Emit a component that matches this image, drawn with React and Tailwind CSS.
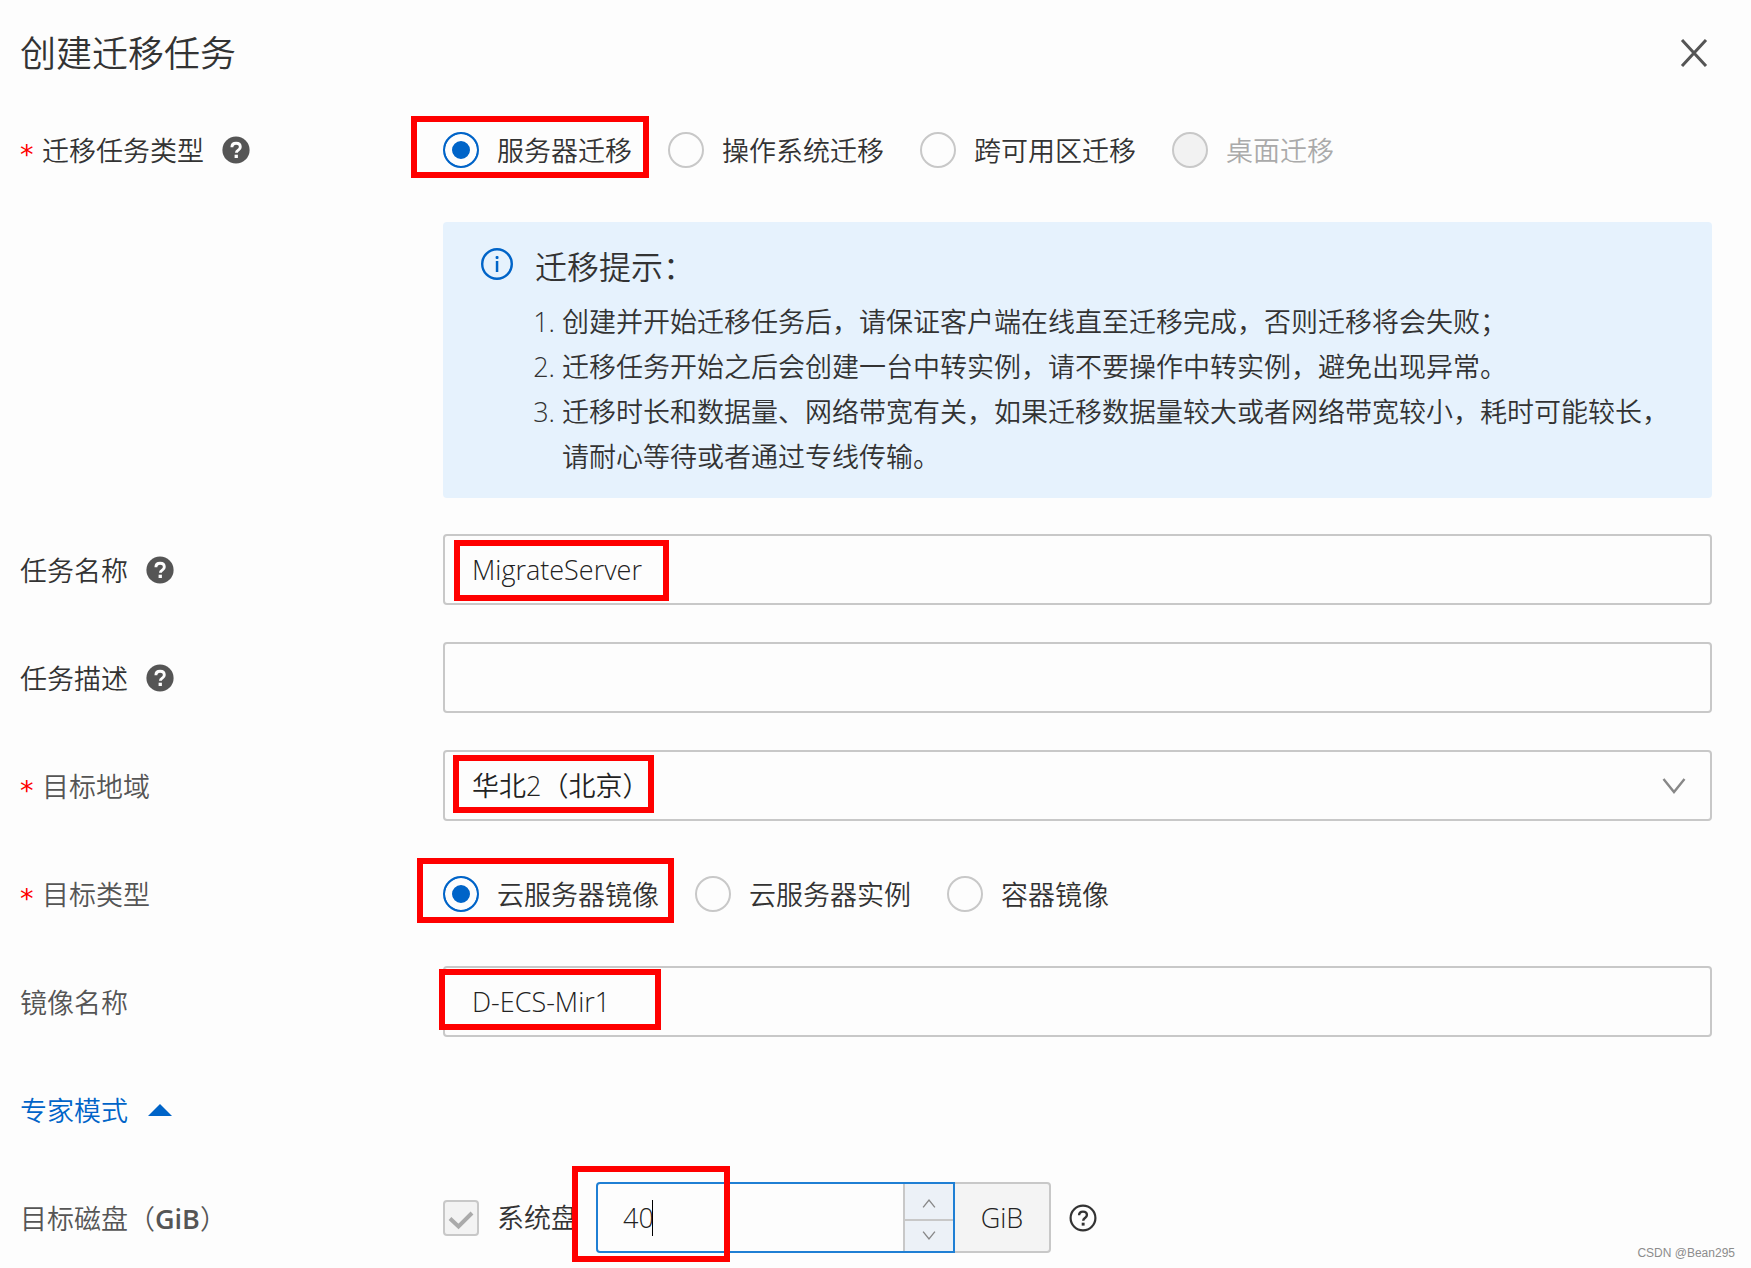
import React from "react";

const RADIO =
  "size-9 shrink-0 appearance-none rounded-full border-2 border-[#c8c8c8] checked:border-[#0064c8] checked:bg-[#0064c8] checked:shadow-[inset_0_0_0_7px_#fdfdfd] disabled:bg-[#f2f2f2]";
const TEXT_BOX =
  "h-[71px] w-full rounded-[4px] border-2 border-[#c8c8c8] bg-transparent px-[27px] text-[#222] outline-none";

function HelpSolid() {
  return (
    <svg viewBox="0 0 28 28" className="size-7 shrink-0" aria-hidden="true">
      <circle cx="14" cy="14" r="13.6" fill="#555" />
      <path d="M9.9 11.2c0-2.500 1.700-4 4.200-4s4.200 1.500 4.200 3.700c0 1.500-.8 2.400-2 3.200-1.300.9-1.900 1.300-1.900 2.700" fill="none" stroke="#fdfdfd" strokeWidth="2.900" />
      <rect x="12.600" y="18.700" width="3.300" height="3.300" fill="#fdfdfd" />
    </svg>
  );
}

function HelpOutline() {
  return (
    <svg viewBox="0 0 28 28" className="size-7 shrink-0" aria-hidden="true">
      <circle cx="14" cy="14" r="12.400" fill="none" stroke="#333" strokeWidth="2.200" />
      <path d="M10.100 11.300c0-2.200 1.500-3.700 3.900-3.700s3.900 1.400 3.900 3.400c0 1.400-.8 2.200-1.900 3-1.200.9-1.800 1.300-1.800 2.800" fill="none" stroke="#333" strokeWidth="2.400" />
      <rect x="12.700" y="18.700" width="2.900" height="2.900" fill="#333" />
    </svg>
  );
}

function Chevron({ className, up }) {
  return (
    <svg viewBox="0 0 24 16" className={className} fill="none" aria-hidden="true">
      <path d={up ? "M1.500 15 12 2 22.500 15" : "M1.500 1 12 14 22.500 1"} stroke="currentColor" strokeWidth="2.400" />
    </svg>
  );
}

function Highlight({ className }) {
  return <span aria-hidden="true" className={"pointer-events-none absolute border-6 border-[#ff0000] " + className} />;
}

function Row({ label, htmlFor, required, help, muted, children }) {
  const Tag = htmlFor ? "label" : "div";
  return (
    <div className="flex min-h-[72px] items-start">
      <div className="flex h-[72px] w-[423px] shrink-0 items-center">
        {required && <span className="w-[22px] pt-2 font-['DejaVu_Sans',sans-serif] font-normal text-[#ff0000]">*</span>}
        <Tag htmlFor={htmlFor} className={muted ? "text-[#555]" : "text-[#333]"}>
          {label}
        </Tag>
        {help && (
          <button type="button" aria-label="帮助" className="ml-[18px]">
            <HelpSolid />
          </button>
        )}
      </div>
      <div className="relative min-w-0 flex-1">{children}</div>
    </div>
  );
}

function RadioGroup({ name, label, options }) {
  return (
    <div role="radiogroup" aria-label={label} className="flex h-[72px] items-center gap-9">
      {options.map((o, i) => (
        <label key={o.text} className={"flex items-center gap-[18px] " + (o.disabled ? "text-[#aaa]" : "text-[#333]")}>
          <input type="radio" name={name} defaultChecked={i === 0} disabled={o.disabled} className={RADIO} />
          {o.text}
        </label>
      ))}
    </div>
  );
}

export default function App() {
  return (
    <main className="relative min-h-screen bg-[#fdfdfd] pr-[39px] pb-3 pl-5 font-['Open_Sans','Noto_Sans_CJK_SC',sans-serif] text-[27px] leading-[45px] font-[350] text-[#333]">
      <header className="flex h-[114px] items-start justify-between pt-7">
        <h1 className="text-[36px] leading-[52px] font-[350]">创建迁移任务</h1>
        <button type="button" aria-label="关闭" className="mt-[11px] mr-1">
          <svg viewBox="0 0 28 28" className="size-7" fill="none" aria-hidden="true">
            <path d="M2 1 26 27M26 1 2 27" stroke="#555" strokeWidth="3" />
          </svg>
        </button>
      </header>

      <form className="flex flex-col gap-9">
        <Row label="迁移任务类型" required help>
          <RadioGroup
            name="task-type"
            label="迁移任务类型"
            options={[{ text: "服务器迁移" }, { text: "操作系统迁移" }, { text: "跨可用区迁移" }, { text: "桌面迁移", disabled: true }]}
          />
          <Highlight className="top-0.5 -left-8 h-[62px] w-[238px]" />
        </Row>

        <section className="ml-[423px] flex gap-[21px] rounded-[4px] bg-[#e6f2fd] pt-[22px] pr-9 pb-[19px] pl-[37px]">
          <svg viewBox="0 0 34 34" className="mt-[3px] size-[34px] shrink-0" fill="none" aria-hidden="true">
            <circle cx="17" cy="17" r="14.800" stroke="#0064c8" strokeWidth="2.400" />
            <rect x="15.600" y="9" width="2.900" height="2.900" rx="1" fill="#0064c8" />
            <rect x="15.800" y="14" width="2.500" height="11" fill="#0064c8" />
          </svg>
          <div>
            <h2 className="mb-2.5 text-[32px] leading-[45px] font-[350]">迁移提示：</h2>
            <ol className="list-outside list-decimal pl-[27px]">
              <li>创建并开始迁移任务后，请保证客户端在线直至迁移完成，否则迁移将会失败；</li>
              <li>迁移任务开始之后会创建一台中转实例，请不要操作中转实例，避免出现异常。</li>
              <li>迁移时长和数据量、网络带宽有关，如果迁移数据量较大或者网络带宽较小，耗时可能较长，请耐心等待或者通过专线传输。</li>
            </ol>
          </div>
        </section>

        <Row label="任务名称" htmlFor="task-name" help>
          <input id="task-name" type="text" defaultValue="MigrateServer" className={TEXT_BOX} />
          <Highlight className="top-1.5 left-[11px] h-[61px] w-[215px]" />
        </Row>

        <Row label="任务描述" htmlFor="task-desc" help>
          <input id="task-desc" type="text" className={TEXT_BOX} />
        </Row>

        <Row label="目标地域" htmlFor="region" required muted>
          <select id="region" className={TEXT_BOX + " appearance-none"}>
            <option>华北2（北京）</option>
          </select>
          <Chevron className="pointer-events-none absolute top-7 right-[26px] h-4 w-6 text-[#888]" />
          <Highlight className="top-[5px] left-2.5 h-[58px] w-[201px]" />
        </Row>

        <Row label="目标类型" required muted>
          <RadioGroup name="target-type" label="目标类型" options={[{ text: "云服务器镜像" }, { text: "云服务器实例" }, { text: "容器镜像" }]} />
          <Highlight className="top-0 -left-[26px] h-[65px] w-[257px]" />
        </Row>

        <Row label="镜像名称" htmlFor="image-name" muted>
          <input id="image-name" type="text" defaultValue="D-ECS-Mir1" className={TEXT_BOX} />
          <Highlight className="top-[3px] -left-1 h-[61px] w-[222px]" />
        </Row>

        <button type="button" className="flex h-[72px] items-center gap-5 self-start text-[#0064c8]">
          专家模式
          <svg viewBox="0 0 24 12" className="h-3 w-6" fill="currentColor" aria-hidden="true">
            <path d="M0 12 12 0 24 12z" />
          </svg>
        </button>

        <Row
          muted
          htmlFor="disk-size"
          label={
            <>
              目标磁盘（<b className="font-semibold">GiB</b>）
            </>
          }
        >
          <div className="flex items-center">
            <label className="flex w-[153px] items-center gap-[18px]">
              <span className="relative flex size-9 shrink-0">
                <input type="checkbox" defaultChecked disabled className="size-9 appearance-none rounded-[4px] border-2 border-[#c8c8c8] bg-[#f3f3f3]" />
                <svg viewBox="0 0 36 36" className="pointer-events-none absolute inset-0" fill="none" aria-hidden="true">
                  <path d="M7 18.500 15.500 26.500 29 13" stroke="#aaa" strokeWidth="4" />
                </svg>
              </span>
              系统盘
            </label>
            <div className="relative flex h-[71px] w-[359px] rounded-l-[4px] border-2 border-[#1f7fd4]">
              <input id="disk-size" type="text" inputMode="numeric" defaultValue="40" className="min-w-0 flex-1 bg-transparent pl-[25px] text-[#222] outline-none" />
              <span aria-hidden="true" className="absolute top-4 left-[54px] h-9 w-px bg-black" />
              <div className="flex w-[50px] flex-col border-l-2 border-[#c8c8c8] bg-[#ecf1f7] text-[#888]">
                <button type="button" aria-label="增加" className="flex flex-1 items-center justify-center border-b-2 border-[#c8c8c8] pt-1">
                  <Chevron up className="h-[9px] w-[14px]" />
                </button>
                <button type="button" aria-label="减少" className="flex flex-1 items-center justify-center">
                  <Chevron className="h-[9px] w-[14px]" />
                </button>
              </div>
            </div>
            <span className="flex h-[71px] w-24 items-center justify-center rounded-r-[4px] border-2 border-l-0 border-[#c8c8c8] bg-[#f4f4f4] text-[#222]">GiB</span>
            <button type="button" aria-label="磁盘帮助" className="ml-[18px]">
              <HelpOutline />
            </button>
          </div>
          <Highlight className="-top-4 left-[129px] h-24 w-[158px]" />
        </Row>
      </form>

      <p className="absolute right-4 bottom-[7px] font-['Liberation_Sans',sans-serif] text-[12px] leading-4 font-normal text-[#8c8c8c]">CSDN @Bean295</p>
    </main>
  );
}
